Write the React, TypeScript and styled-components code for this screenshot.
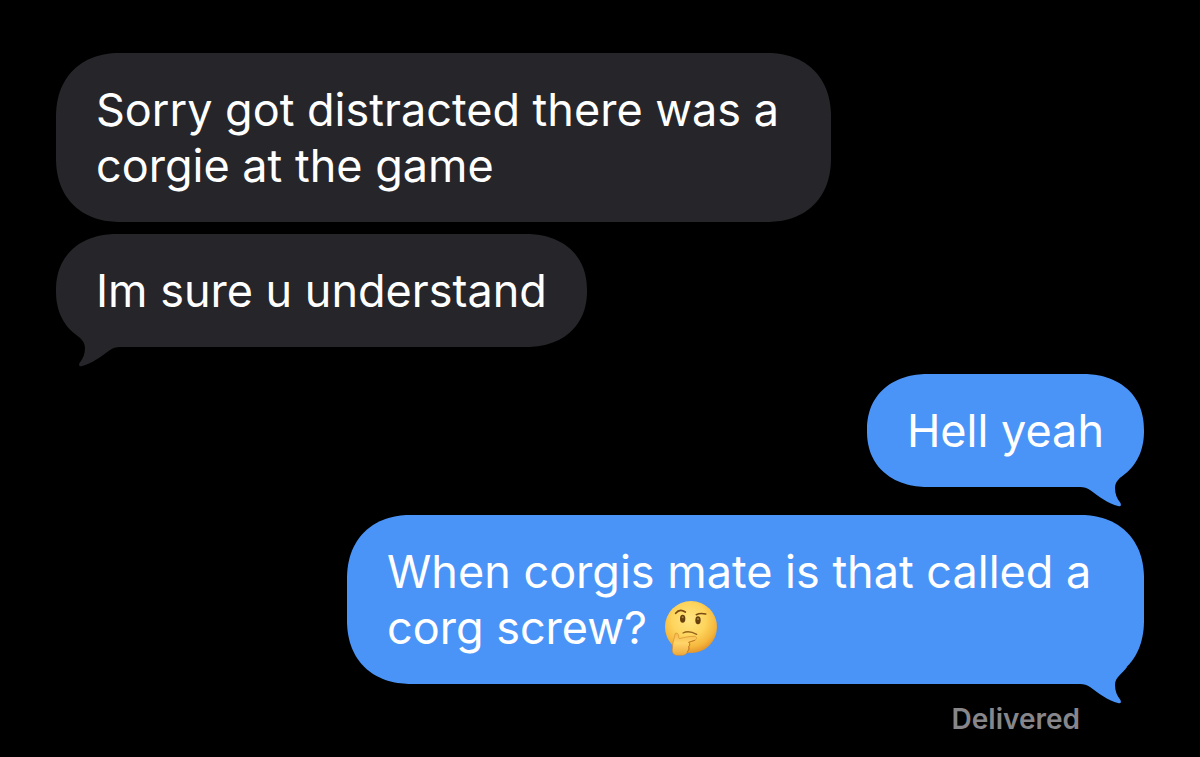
import React from "react";
import styled, { createGlobalStyle, css } from "styled-components";

const GlobalStyle = createGlobalStyle`
  body {
    margin: 0;
    background: #000;
  }
`;

type Side = "incoming" | "outgoing";

const Thread = styled.main`
  box-sizing: border-box;
  padding: 53px 56px 22px;
  font-family: Inter, "Liberation Sans", sans-serif;
  color: #fff;
`;

const Group = styled.section<{ $side: Side }>`
  display: flex;
  flex-direction: column;
  align-items: ${({ $side }) => ($side === "incoming" ? "flex-start" : "flex-end")};
  gap: ${({ $side }) => ($side === "incoming" ? 12 : 28)}px;

  & + & {
    margin-top: 27px;
  }
`;

const Bubble = styled.p<{ $side: Side; $tall?: boolean }>`
  position: relative;
  box-sizing: border-box;
  margin: 0;
  padding: 29px 40px 28px;
  font-size: 45px;
  line-height: 56px;
  border-radius: ${({ $tall }) => ($tall ? "64px" : "62px / 56px")};
  corner-shape: superellipse(1.15);
  ${({ $side }) =>
    $side === "incoming"
      ? css`
          max-width: 775px;
          background: #26262a;
        `
      : css`
          max-width: 797px;
          background: #4a94f8;
        `}
`;

const TailShape = styled.svg<{ $side: Side }>`
  position: absolute;
  bottom: -20px;
  width: 64px;
  height: 40px;
  ${({ $side }) =>
    $side === "incoming"
      ? css`
          left: 0;
          transform: scaleX(-1);
          fill: #26262a;
        `
      : css`
          right: 0;
          fill: #4a94f8;
        `}
`;

const EmojiArt = styled.svg`
  display: inline-block;
  width: 54px;
  height: 57px;
  margin: -8px 0 -8px 4px;
  vertical-align: -5px;
`;

const Status = styled.footer`
  margin: 18px 64px 0 0;
  font-size: 28px;
  font-weight: 600;
  line-height: 34px;
  text-align: right;
  color: #86868b;
`;

function Tail({ side }: { side: Side }) {
  return (
    <TailShape $side={side} viewBox="0 0 64 40" aria-hidden="true">
      <path d="M47 3C42 10 35 13 35 21C35 27 37 32 40.500 36Q42 40 38 39C29 37 18 29 10 23Q6 20 0 20L0 6L30 0Z" />
    </TailShape>
  );
}

function ThinkingFace() {
  return (
    <EmojiArt viewBox="42 30 162 171" role="img" aria-label="Thinking face">
      <defs>
        <radialGradient id="face" cx="0.46" cy="0.36" r="0.66">
          <stop offset="0" stopColor="#ffe582" />
          <stop offset="0.5" stopColor="#fdd45c" />
          <stop offset="0.8" stopColor="#f5b63c" />
          <stop offset="1" stopColor="#e1902b" />
        </radialGradient>
        <linearGradient id="hand" x1="0" y1="0" x2="0" y2="1">
          <stop offset="0" stopColor="#f6b94a" />
          <stop offset="0.45" stopColor="#ffd56a" />
          <stop offset="1" stopColor="#eda93c" />
        </linearGradient>
      </defs>
      <circle cx="123" cy="111" r="78" fill="url(#face)" />
      <g fill="none" stroke="#7a4a12" strokeLinecap="round">
        <path d="M77 70Q89 54 106 66" strokeWidth="5" />
        <path d="M139 74Q150 68 167 72" strokeWidth="5" />
        <path d="M99 129Q116 120 140 133" strokeWidth="4" stroke="#95621c" />
      </g>
      <ellipse cx="98" cy="86" rx="8" ry="12" fill="#65400f" />
      <ellipse cx="144" cy="91" rx="8" ry="12" fill="#65400f" />
      <circle cx="98" cy="82" r="3" fill="#a88145" />
      <circle cx="144" cy="87" r="3" fill="#a88145" />
      <path
        d="M76 130C82 127 87 134 86 142L88 146C102 142 122 138 134 139C142 140 141 148 134 151L116 157C121 161 119 167 116 170C118 175 117 180 113 183C111 191 105 196 96 196L82 196C72 196 66 189 67 178L69 158Z"
        fill="url(#hand)"
        stroke="#d58d2d"
        strokeWidth="2"
      />
      <path
        d="M134 151L116 157C121 161 119 167 116 170C118 175 117 180 113 184"
        fill="none"
        stroke="#c37a24"
        strokeWidth="3"
        strokeLinecap="round"
      />
    </EmojiArt>
  );
}

export default function App() {
  return (
    <>
      <GlobalStyle />
      <Thread>
        <Group $side="incoming">
          <Bubble $side="incoming" $tall>
            Sorry got distracted there was a corgie at the game
          </Bubble>
          <Bubble $side="incoming">
            Im sure u understand
            <Tail side="incoming" />
          </Bubble>
        </Group>
        <Group $side="outgoing">
          <Bubble $side="outgoing">
            Hell yeah
            <Tail side="outgoing" />
          </Bubble>
          <Bubble $side="outgoing" $tall>
            When corgis mate is that called a corg screw? <ThinkingFace />
            <Tail side="outgoing" />
          </Bubble>
        </Group>
        <Status>Delivered</Status>
      </Thread>
    </>
  );
}
